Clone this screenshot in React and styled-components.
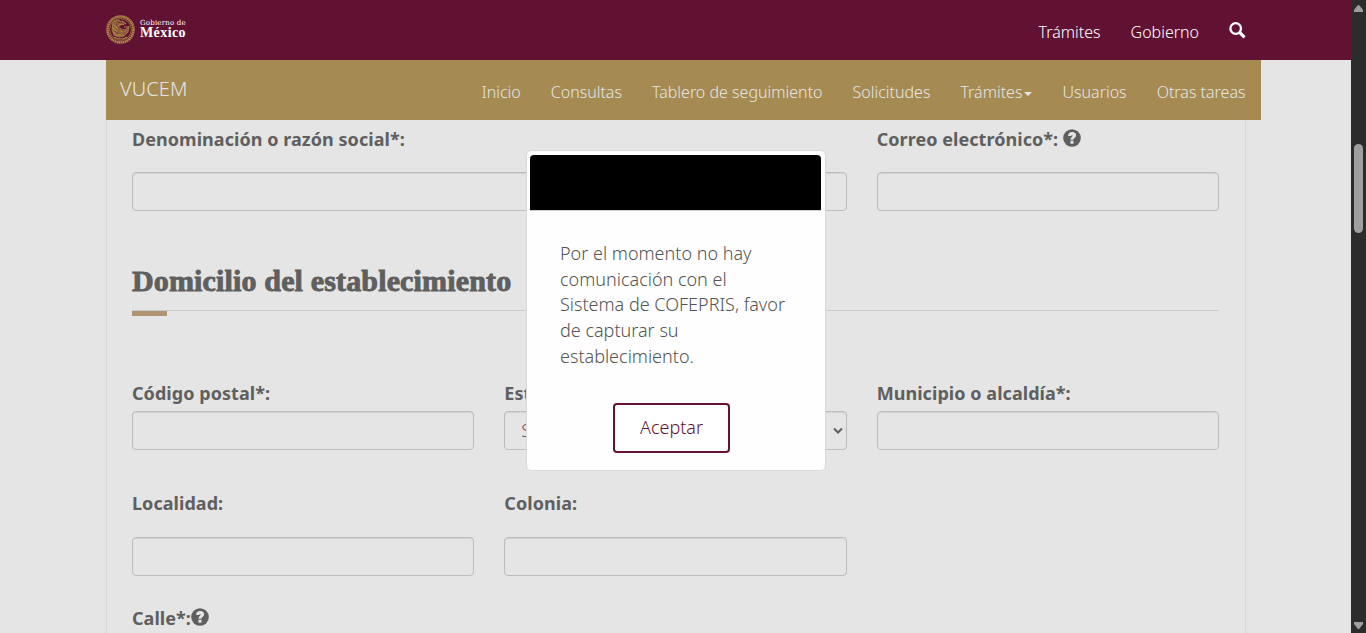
import React from "react";
import styled, { createGlobalStyle } from "styled-components";

const GlobalStyle = createGlobalStyle`
  *, *::before, *::after { box-sizing: border-box; }
  body {
    margin: 0;
    background: #e5e5e5;
    color: #5f5f60;
    font-family: "Noto Sans", "Open Sans", sans-serif;
    font-weight: 300;
    font-size: 18px;
    line-height: 25.7px;
  }
`;

const Window = styled.div`
  position: relative;
  display: flex;
  width: 1366px;
  height: 633px;
  overflow: hidden;
`;

const Page = styled.div`
  flex: 1;
  min-width: 0;
  display: flex;
  flex-direction: column;
`;

const GovBar = styled.header`
  flex: none;
  height: 60px;
  padding: 0 105px 0 106px;
  display: flex;
  justify-content: space-between;
  background: #611232;
`;

const Brand = styled.div`
  display: flex;
  align-items: center;
  gap: 5px;
  padding-bottom: 2px;
`;

const BrandText = styled.div`
  display: flex;
  flex-direction: column;
  color: #fff;
  font-family: "Liberation Serif", serif;
  font-weight: 700;
`;

const BrandSmall = styled.span`
  font-family: "DejaVu Serif", serif;
  font-weight: 400;
  font-size: 7px;
  line-height: 7px;
  letter-spacing: 0.2px;
`;

const BrandLarge = styled.span`
  font-size: 14px;
  line-height: 12px;
  letter-spacing: 0.4px;
`;

const Links = styled.nav`
  display: flex;
  align-items: center;
  gap: 30px;
  padding-top: 4px;
  color: ${(p) => p.$color};
  font-size: 16px;
  line-height: 22px;
`;

const Link = styled.a`
  display: flex;
  align-items: center;
  white-space: nowrap;
  color: inherit;
`;

const SearchIcon = styled.svg`
  display: block;
  width: 17px;
  height: 17px;
  margin-top: -3px;
`;

const Caret = styled.span`
  margin: 4px 0 0 2px;
  border: 4px solid transparent;
  border-top-color: currentColor;
  border-bottom: 0;
`;

const SiteBar = styled.div`
  flex: none;
  width: 1155px;
  height: 60px;
  margin-left: 106px;
  padding: 0 15.5px 0 14px;
  display: flex;
  justify-content: space-between;
  background: #a58b52;
`;

const SiteName = styled.span`
  padding-top: 16px;
  color: #e5e5e5;
  font-size: 20px;
  line-height: 26px;
  letter-spacing: 0.1px;
`;

const Panel = styled.main`
  flex: 1;
  width: 1140px;
  margin-left: 106px;
  padding: 7px 26px 0 25px;
  border: solid #d8d8d8;
  border-width: 0 1px;
`;

const Row = styled.div`
  display: grid;
  grid-template-columns: repeat(3, 1fr);
  gap: 30px;
  margin-top: ${(p) => p.$top || 0}px;
`;

const Field = styled.div`
  grid-column: span ${(p) => p.$span || 1};
`;

const Label = styled.label`
  display: flex;
  align-items: center;
  gap: ${(p) => p.$gap || 0}px;
  height: 26px;
  margin-bottom: ${(p) => p.$space}px;
  font-weight: 700;
  letter-spacing: 0.05px;
  white-space: nowrap;
`;

const HelpIcon = styled.svg`
  width: 18px;
  height: 18px;
  margin-top: -4px;
`;

const Input = styled.div`
  display: flex;
  align-items: center;
  justify-content: space-between;
  height: 39px;
  padding: 0 3px 0 16px;
  border: 1px solid #bcbcbc;
  border-radius: 4px;
  box-shadow: inset 0 1px 1px rgba(0, 0, 0, 0.07);
`;

const Chevron = styled.svg`
  width: 10px;
  height: 8px;
`;

const Title = styled.h3`
  height: 58px;
  margin: 42px 0 0;
  padding-top: 11px;
  border-bottom: 1px solid #cbcbcb;
  font-family: "Liberation Serif", serif;
  font-weight: 700;
  font-size: 30px;
  line-height: 33px;
  letter-spacing: 0.15px;
  white-space: nowrap;
  -webkit-text-stroke: 0.9px currentColor;
`;

const Accent = styled.div`
  width: 35px;
  height: 5px;
  background: #b09471;
`;

const Dialog = styled.section`
  position: absolute;
  left: 526px;
  top: 150px;
  width: 300px;
  height: 321px;
  padding: 4px 4px 0 3px;
  border: 1px solid #d9d9d9;
  border-radius: 5px;
  background: #fefefe;
`;

const DialogHead = styled.div`
  height: 56px;
  border-bottom: 1px solid #cfcfcf;
  border-radius: 4px 4px 0 0;
  background: #000;
  background-clip: padding-box;
`;

const DialogText = styled.p`
  width: 231px;
  margin: 30px 0 0 30px;
  color: #545454;
`;

const Accept = styled.button`
  display: block;
  width: 117px;
  height: 50px;
  margin: 33.5px auto 0 83px;
  padding: 0;
  border: 2px solid #611232;
  border-radius: 4px;
  background: #fff;
  color: #611232;
  font: inherit;
`;

const Scrollbar = styled.div`
  flex: none;
  width: 15px;
  padding: 5px 0 4px 3px;
  display: flex;
  flex-direction: column;
  background: #2c2c2c;
`;

const Arrow = styled.svg`
  flex: none;
  width: 9px;
  height: 7px;
`;

const Thumb = styled.div`
  width: 9px;
  height: 89px;
  margin: 132px 0 auto;
  border-radius: 5px;
  background: #9f9f9f;
`;

const Seal = () => (
  <svg width="29" height="29" viewBox="0 0 29 29" fill="none" stroke="#a98544">
    <circle cx="14.5" cy="14.5" r="13" strokeWidth="2.6" strokeDasharray="1.7 .35" />
    <circle cx="14.5" cy="14.5" r="10.9" strokeWidth=".8" />
    <path d="M7 7l5-2 4 2 2 3-3-1-3 2 3 3 5 1 3-4-1 6-4 4-5 1-5-2-2-5z" fill="#a98544" fillOpacity=".65" strokeWidth=".8" />
    <path d="M7 9l5 5m-6-2l5 5m-4 0l5 4m4-12l-5 3m3 4l6 1m-8 3l5 0M8 22q7 4 13 0M16 6l4 3m-2 3l4 0" strokeWidth="1.1" />
    <path d="M10 9l4 5m-3-7l6 1m-8 8l3 3m4-5l3 4" stroke="#611232" strokeWidth=".6" />
  </svg>
);

const Help = () => (
  <HelpIcon viewBox="0 0 18 18">
    <circle cx="9" cy="9" r="8.8" fill="#5f5f60" />
    <path
      d="M5.2 7V6.1Q5.7 3.1 9.2 3.1Q13.1 3.2 13.1 6.5Q13.1 8.2 11.2 9.2Q10.5 9.7 10.5 10.7H7.5Q7.3 9.1 8.8 7.9Q9.8 7.1 9.5 6.4Q8.9 5.6 8.2 7ZM7.5 11.8H10.5V14.8H7.5Z"
      fill="#e5e5e5"
    />
  </HelpIcon>
);

export default function App() {
  return (
    <Window>
      <GlobalStyle />
      <Page>
        <GovBar>
          <Brand>
            <Seal />
            <BrandText>
              <BrandSmall>Gobierno de</BrandSmall>
              <BrandLarge>México</BrandLarge>
            </BrandText>
          </Brand>
          <Links $color="#fff">
            <Link>Trámites</Link>
            <Link>Gobierno</Link>
            <SearchIcon viewBox="0 0 17 17" fill="none" stroke="#fff">
              <circle cx="6.7" cy="6.5" r="5.3" strokeWidth="2.3" />
              <path d="M10.5 10.3l5 5" strokeWidth="3.2" />
            </SearchIcon>
          </Links>
        </GovBar>
        <SiteBar>
          <SiteName>VUCEM</SiteName>
          <Links $color="#e5e5e5">
            <Link>Inicio</Link>
            <Link>Consultas</Link>
            <Link>Tablero de seguimiento</Link>
            <Link>Solicitudes</Link>
            <Link>Trámites<Caret /></Link>
            <Link>Usuarios</Link>
            <Link>Otras tareas</Link>
          </Links>
        </SiteBar>
        <Panel>
          <Row>
            <Field $span={2}>
              <Label $space={19}>Denominación o razón social*:</Label>
              <Input />
            </Field>
            <Field>
              <Label $space={19} $gap={5}>Correo electrónico*: <Help /></Label>
              <Input />
            </Field>
          </Row>
          <Title>Domicilio del establecimiento</Title>
          <Accent />
          <Row $top={65}>
            <Field>
              <Label $space={4}>Código postal*:</Label>
              <Input />
            </Field>
            <Field>
              <Label $space={4}>Estado*:</Label>
              <Input>
                Seleccione
                <Chevron viewBox="0 0 10 8" fill="none" stroke="#5f5f60" strokeWidth="2">
                  <path d="M1 1.5l4 4 4-4" />
                </Chevron>
              </Input>
            </Field>
            <Field>
              <Label $space={4}>Municipio o alcaldía*:</Label>
              <Input />
            </Field>
          </Row>
          <Row $top={41}>
            <Field>
              <Label $space={20}>Localidad:</Label>
              <Input />
            </Field>
            <Field>
              <Label $space={20}>Colonia:</Label>
              <Input />
            </Field>
          </Row>
          <Row $top={30}>
            <Field>
              <Label $space={0}>Calle*:<Help /></Label>
            </Field>
          </Row>
        </Panel>
      </Page>
      <Scrollbar>
        <Arrow viewBox="0 0 9 7"><path d="M3.5 .5Q4.5-.5 5.5.5L9 5V7H0V5Z" fill="#9f9f9f" /></Arrow>
        <Thumb />
        <Arrow viewBox="0 0 9 7"><path d="M3.5 6.5Q4.5 7.5 5.5 6.5L9 2V0H0V2Z" fill="#9f9f9f" /></Arrow>
      </Scrollbar>
      <Dialog>
        <DialogHead />
        <DialogText>
          Por el momento no hay comunicación con el Sistema de COFEPRIS, favor de capturar su establecimiento.
        </DialogText>
        <Accept>Aceptar</Accept>
      </Dialog>
    </Window>
  );
}
